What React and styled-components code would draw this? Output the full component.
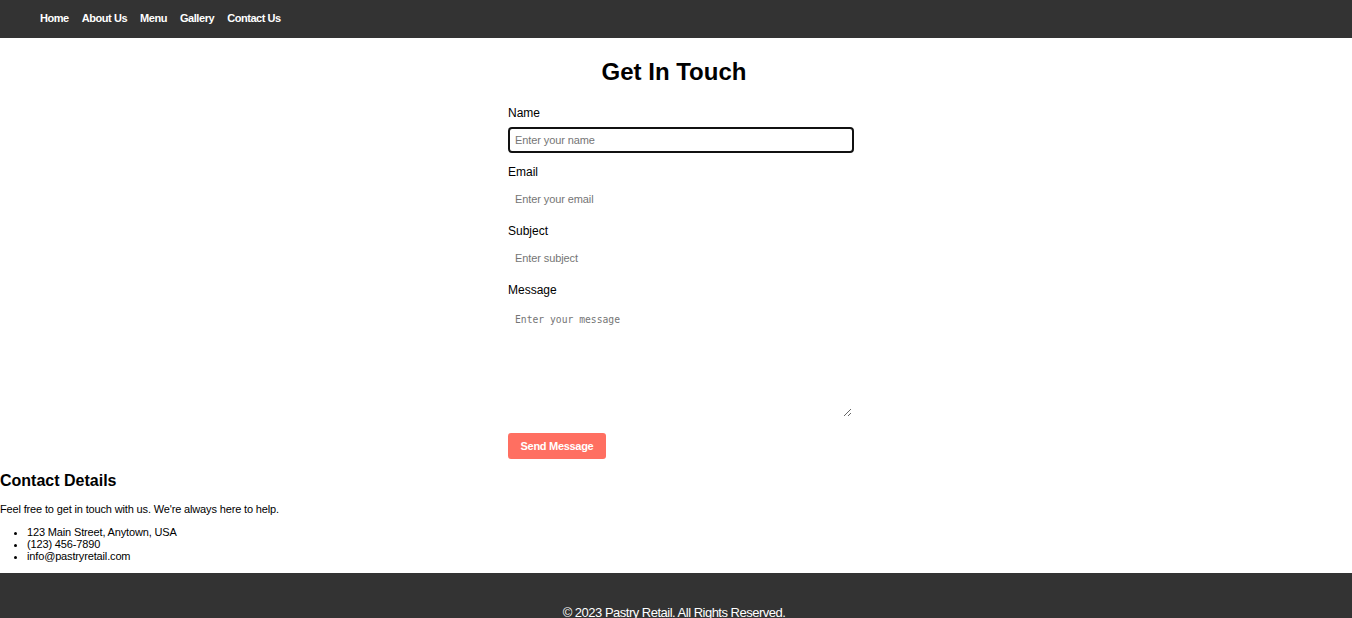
import React from 'react'
import styled, { createGlobalStyle } from 'styled-components'

const GlobalStyle = createGlobalStyle`
    body {
        margin: 0;
        font-family: "Liberation Sans", Arial, sans-serif;
        color: #000;
        background: #fff;
    }
`;

const NavBar = styled.nav`
    background: #333333;
    height: 38px;
    display: flex;
    align-items: center;
    padding-left: 40px;
    gap: 13px;
`;

const NavLink = styled.a`
    color: #fff;
    font-size: 11px;
    font-weight: bold;
    text-decoration: none;
    letter-spacing: -0.45px;
    margin-top: -2px;
`;

const ContactSection = styled.section`
    display: flex;
    flex-direction: column;
    align-items: center;
    padding: 20px 4px 0 0;
`;

const Title = styled.h2`
    margin: 0 0 19px;
    font-size: 24px;
    font-weight: bold;
    line-height: 28px;
`;

const Form = styled.form`
    width: 332px;
    display: flex;
    flex-direction: column;
`;

const Label = styled.label`
    font-size: 12px;
    line-height: 16px;
    margin-bottom: 6px;
`;

const Input = styled.input`
    width: 100%;
    box-sizing: content-box;
    padding: 5px;
    height: 12px;
    font-family: "Liberation Sans", Arial, sans-serif;
    font-size: 11px;
    letter-spacing: -0.1px;
    border: 2px solid ${p => (p.$focused ? '#111' : 'transparent')};
    border-radius: 4px;
    margin: 0 0 11px;
    outline: none;
    &::placeholder { color: #757575; }
`;

const TextArea = styled.textarea`
    width: 100%;
    box-sizing: content-box;
    padding: 8px 5px;
    height: 95px;
    font-family: "DejaVu Sans Mono", monospace;
    font-size: 9.7px;
    border: 2px solid transparent;
    border-radius: 4px;
    margin: 0 0 14px;
    outline: none;
    &::placeholder { color: #757575; }
`;

const SendButton = styled.button`
    align-self: flex-start;
    width: 98px;
    height: 26px;
    background: #ff6f61;
    color: #fff;
    font-family: "Liberation Sans", Arial, sans-serif;
    font-size: 11px;
    font-weight: bold;
    letter-spacing: -0.3px;
    border: none;
    border-radius: 3px;
    cursor: pointer;
`;

const Details = styled.section`
    padding-top: 13px;
    padding-bottom: 11px;
    h3 {
        margin: 0 0 13px;
        font-size: 16px;
        line-height: 18px;
    }
    p {
        margin: 0 0 10px;
        font-size: 11px;
        line-height: 13px;
        letter-spacing: -0.15px;
    }
    ul {
        margin: 0;
        padding-left: 27px;
        font-size: 11px;
        line-height: 12px;
        letter-spacing: -0.15px;
    }
`;

const Footer = styled.footer`
    background: #333333;
    color: #fff;
    text-align: center;
    padding: 32px 4px 20px 0;
    font-size: 13px;
    letter-spacing: -0.5px;
    p { margin: 0; }
`;

export default function App() {
    return (
        <>
            <GlobalStyle />
            <NavBar>
                <NavLink href="#">Home</NavLink>
                <NavLink href="#">About Us</NavLink>
                <NavLink href="#">Menu</NavLink>
                <NavLink href="#">Gallery</NavLink>
                <NavLink href="#">Contact Us</NavLink>
            </NavBar>
            <ContactSection>
                <Title>Get In Touch</Title>
                <Form onSubmit={e => e.preventDefault()}>
                    <Label htmlFor="name">Name</Label>
                    <Input id="name" $focused placeholder="Enter your name" />
                    <Label htmlFor="email">Email</Label>
                    <Input id="email" placeholder="Enter your email" />
                    <Label htmlFor="subject">Subject</Label>
                    <Input id="subject" placeholder="Enter subject" />
                    <Label htmlFor="message">Message</Label>
                    <TextArea id="message" placeholder="Enter your message" />
                    <SendButton type="submit">Send Message</SendButton>
                </Form>
            </ContactSection>
            <Details>
                <h3>Contact Details</h3>
                <p>Feel free to get in touch with us. We're always here to help.</p>
                <ul>
                    <li>123 Main Street, Anytown, USA</li>
                    <li>(123) 456-7890</li>
                    <li>info@pastryretail.com</li>
                </ul>
            </Details>
            <Footer>
                <p>© 2023 Pastry Retail. All Rights Reserved.</p>
            </Footer>
        </>
    )
}
